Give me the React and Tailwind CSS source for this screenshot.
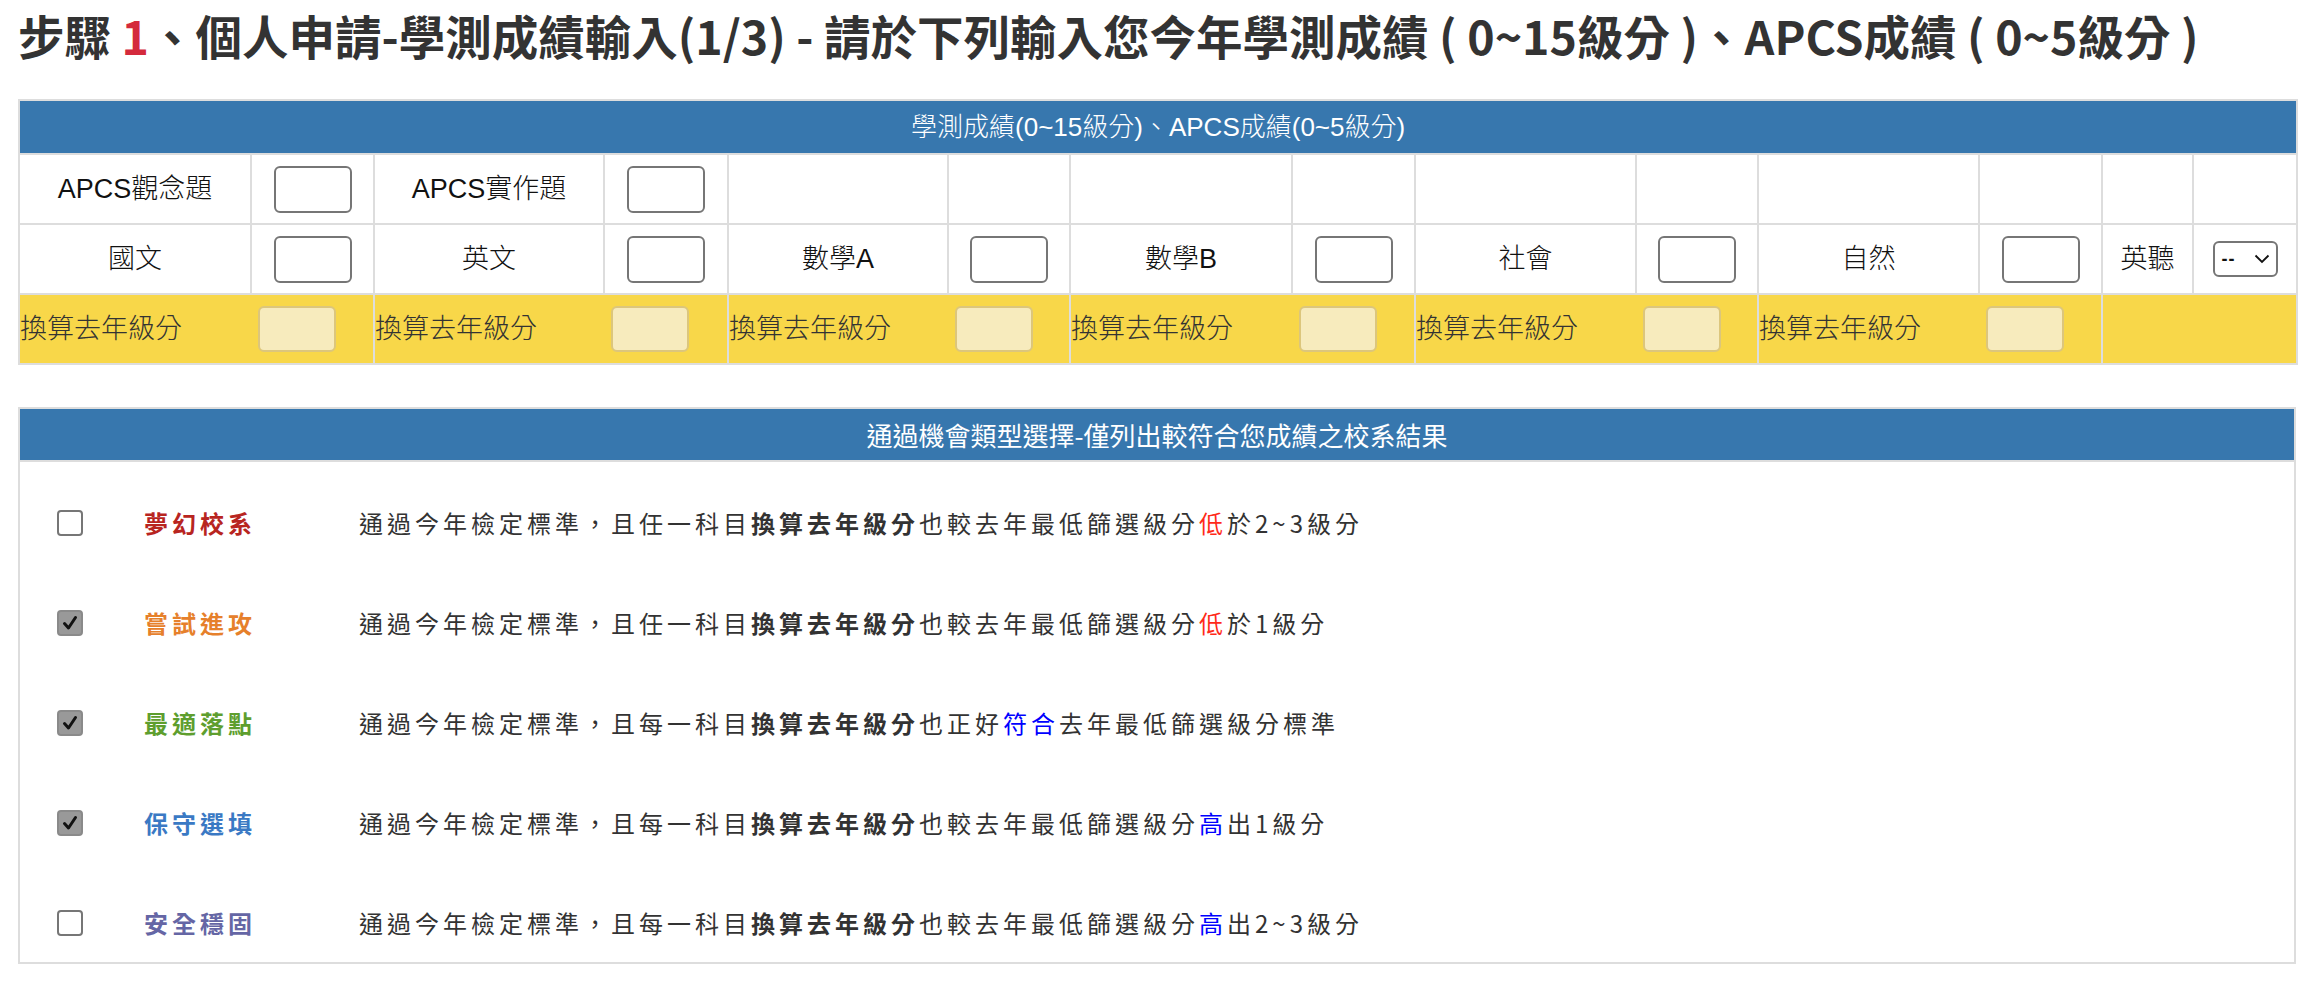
export default function App() {
  const colWidths = [
    "w-[232px]", "w-[123px]", "w-[230px]", "w-[124px]", "w-[220px]", "w-[122px]", "w-[222px]",
    "w-[123px]", "w-[221px]", "w-[122px]", "w-[221px]", "w-[123px]", "w-[91px]", "w-[104px]",
  ];

  const cell = "border-2 border-[#dddddd] h-[70px] p-0 text-center align-middle";
  const Input = () => (
    <div className="mx-auto w-[78px] h-[47px] border-2 border-[#767676] rounded-[6px] bg-white" />
  );
  const YInput = () => (
    <div className="w-[78px] h-[46px] border-2 border-[#dcc67c] rounded-[6px] bg-[#f7ebbd]" />
  );

  const row2 = ["國文", "英文", "數學A", "數學B", "社會", "自然"];

  const options = [
    { checked: false, label: "夢幻校系", color: "text-[#b8251f]", pre: "通過今年檢定標準，且任一科目", mid: "也較去年最低篩選級分", hl: "低", hlColor: "text-[#ff2a1a]", post: "於2~3級分" },
    { checked: true, label: "嘗試進攻", color: "text-[#e6802b]", pre: "通過今年檢定標準，且任一科目", mid: "也較去年最低篩選級分", hl: "低", hlColor: "text-[#ff2a1a]", post: "於1級分" },
    { checked: true, label: "最適落點", color: "text-[#5e9e2e]", pre: "通過今年檢定標準，且每一科目", mid: "也正好", hl: "符合", hlColor: "text-[#0000ff]", post: "去年最低篩選級分標準" },
    { checked: true, label: "保守選填", color: "text-[#3a79c4]", pre: "通過今年檢定標準，且每一科目", mid: "也較去年最低篩選級分", hl: "高", hlColor: "text-[#0000ff]", post: "出1級分" },
    { checked: false, label: "安全穩固", color: "text-[#6566a5]", pre: "通過今年檢定標準，且每一科目", mid: "也較去年最低篩選級分", hl: "高", hlColor: "text-[#0000ff]", post: "出2~3級分" },
  ];

  return (
    <div className="w-[2314px] min-h-[985px] bg-white px-[18px] font-['Noto_Sans_CJK_TC',sans-serif]">
      {/* Heading */}
      <div className="h-[70px] flex items-center">
        <h1 className="text-[46.5px] font-bold text-[#333333] leading-none whitespace-nowrap">
          步驟 <span className="text-[#d42a3c]">1</span>、個人申請-學測成績輸入(1/3) - 請於下列輸入您今年學測成績 ( 0~15級分 )、APCS成績 ( 0~5級分 )
        </h1>
      </div>

      {/* Score table */}
      <table className="mt-[29px] w-[2278px] table-fixed border-collapse border-2 border-[#dddddd] font-['Liberation_Sans','Noto_Sans_CJK_TC',sans-serif] text-[27px] font-light text-[#111111]">
        <colgroup>
          {colWidths.map((w, i) => (
            <col key={i} className={w} />
          ))}
        </colgroup>
        <thead>
          <tr>
            <th colSpan={14} className="h-[54px] bg-[#3777ae] text-white font-light text-[26px] p-0 border-2 border-[#dddddd]">
              學測成績(0~15級分)、APCS成績(0~5級分)
            </th>
          </tr>
        </thead>
        <tbody>
          <tr>
            <td className={cell}>APCS觀念題</td>
            <td className={cell}><Input /></td>
            <td className={cell}>APCS實作題</td>
            <td className={cell}><Input /></td>
            {Array.from({ length: 10 }).map((_, i) => (
              <td key={i} className={cell}></td>
            ))}
          </tr>
          <tr>
            {row2.map((s) => [
              <td key={s} className={cell}>{s}</td>,
              <td key={s + "i"} className={cell}><Input /></td>,
            ])}
            <td className={cell}>英聽</td>
            <td className={cell}>
              <div className="mx-auto flex items-center justify-between w-[65px] h-[36px] border-2 border-[#767676] rounded-[6px] pl-[7px] pr-[6px] bg-white">
                <span className="text-[18px] font-bold leading-none text-[#111] tracking-[1px]">--</span>
                <svg width="16" height="10" viewBox="0 0 16 10" fill="none">
                  <path d="M1.5 1.5 L8 8 L14.5 1.5" stroke="#111" strokeWidth="1.8" />
                </svg>
              </div>
            </td>
          </tr>
          <tr>
            {row2.map((s) => [
              <td key={s + "y"} className="h-[70px] p-0 bg-[#f8d749] border-y-2 border-l-2 border-r-0 border-[#dddddd] text-left align-middle text-[#333333]">
                換算去年級分
              </td>,
              <td key={s + "yi"} className="h-[70px] p-0 pl-[7px] bg-[#f8d749] border-y-2 border-r-2 border-l-0 border-[#dddddd] align-middle">
                <YInput />
              </td>,
            ])}
            <td colSpan={2} className="h-[70px] p-0 bg-[#f8d749] border-2 border-[#dddddd]"></td>
          </tr>
        </tbody>
      </table>

      {/* Options table */}
      <div className="mt-[42px] w-[2278px] border-2 border-[#dddddd]">
        <div className="h-[53px] bg-[#3777ae] text-white text-[26px] flex items-center justify-center border-b-2 border-[#dddddd]">
          通過機會類型選擇-僅列出較符合您成績之校系結果
        </div>
        <div className="flex flex-col gap-[44px] pt-[33px] pb-[11px] pl-[37px]">
          {options.map((o) => (
            <div key={o.label} className="h-[56px] flex items-center">
              {o.checked ? (
                <div className="w-[26px] h-[26px] rounded-[4px] bg-[#999999] border-2 border-[#8a8a8a] flex items-center justify-center">
                  <svg width="18" height="18" viewBox="0 0 18 18" fill="none">
                    <path d="M3.5 9.5 L7.5 14 L14.5 3.5" stroke="#111111" strokeWidth="3" strokeLinecap="round" strokeLinejoin="round" />
                  </svg>
                </div>
              ) : (
                <div className="w-[26px] h-[26px] rounded-[4px] bg-white border-2 border-[#767676]" />
              )}
              <div className={`ml-[61px] w-[215px] text-[24px] font-bold tracking-[4px] ${o.color}`}>{o.label}</div>
              <div className="text-[24px] tracking-[4px] text-[#333333] whitespace-nowrap">
                {o.pre}
                <b className="font-bold">換算去年級分</b>
                {o.mid}
                <span className={o.hlColor}>{o.hl}</span>
                {o.post}
              </div>
            </div>
          ))}
        </div>
      </div>
    </div>
  );
}
